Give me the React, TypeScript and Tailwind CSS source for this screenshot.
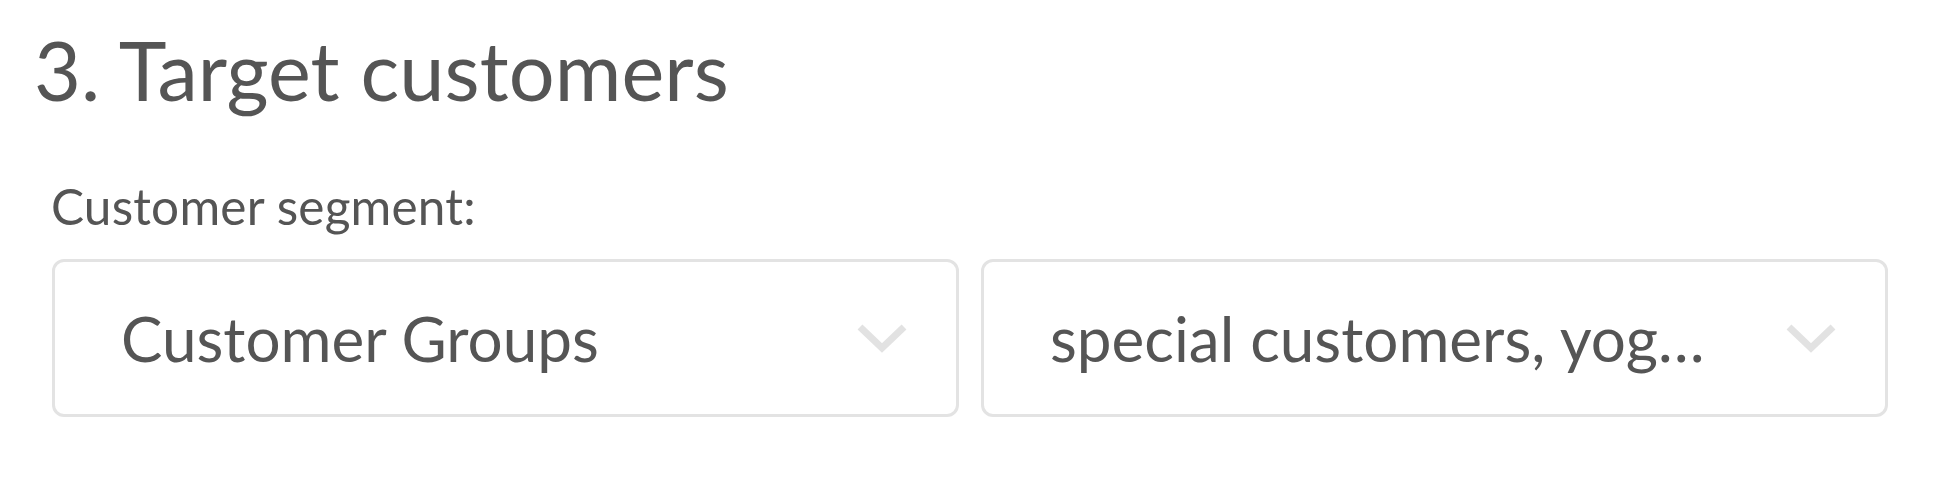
type SelectBoxProps = {
  value: string;
};

function SelectBox({ value }: SelectBoxProps) {
  return (
    <div className="flex h-[158px] w-[907px] items-center justify-between rounded-[12px] border-[3px] border-[#e3e3e3] bg-white pl-[66px] pr-[48px]">
      <span className="pt-[2px] text-[62px] leading-[1.2] whitespace-nowrap">{value}</span>
      <svg
        width="52"
        height="34"
        viewBox="0 0 52 34"
        fill="none"
        stroke="#e2e2e2"
        strokeWidth="7"
        strokeLinejoin="miter"
      >
        <path d="M4 6 L26 27 L48 6" />
      </svg>
    </div>
  );
}

export default function App() {
  return (
    <div className="h-[480px] w-[1956px] bg-white font-['Lato',sans-serif] text-[#555555]">
      <div className="pl-[34px] pt-[21px]">
        <h1 className="text-[81px] font-normal leading-[1.2] tracking-[0.1px]">3. Target customers</h1>
        <p className="mt-[59px] pl-[17px] text-[49.5px] leading-[1.2] tracking-[0.2px]">Customer segment:</p>
        <div className="mt-[22px] flex gap-[22px] pl-[18px]">
          <SelectBox value="Customer Groups" />
          <SelectBox value="special customers, yog…" />
        </div>
      </div>
    </div>
  );
}
